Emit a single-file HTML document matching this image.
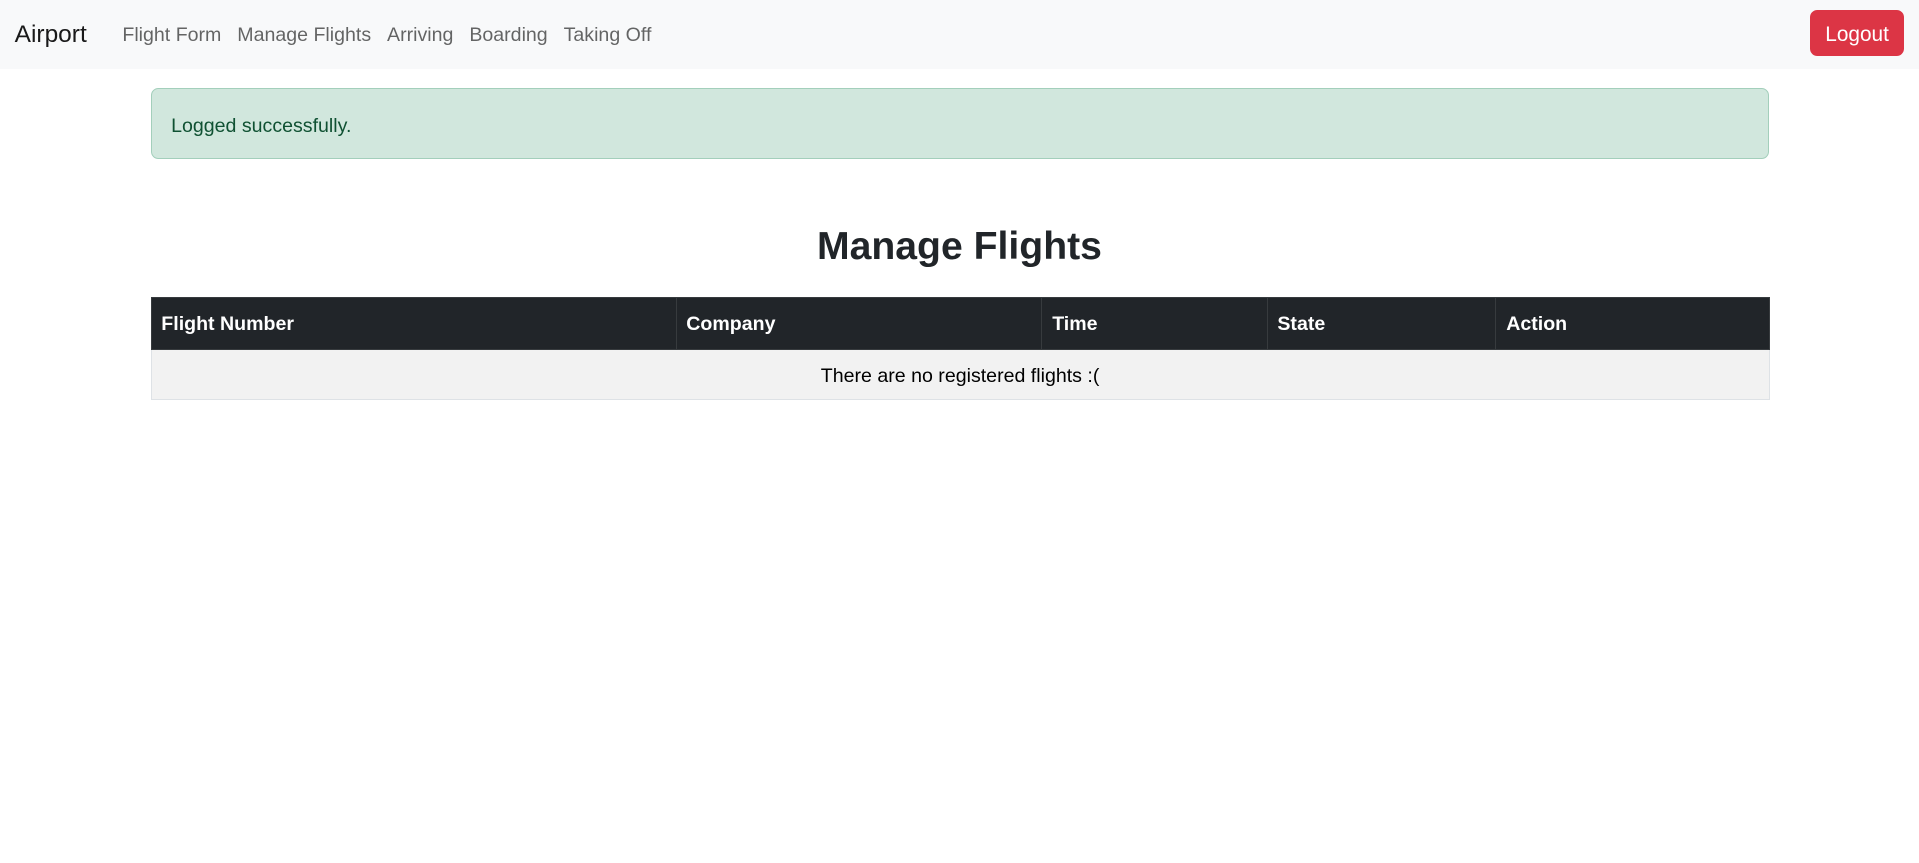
<!DOCTYPE html>
<html><head><meta charset="utf-8"><style>
html,body{margin:0;padding:0;background:#fff;}
#w{zoom:1.2238;width:1568px;height:705px;position:relative;font-family:"Liberation Sans",sans-serif;color:#212529;font-size:16px;}
.nav{position:absolute;left:0;top:0;width:1568px;height:56px;background:#f8f9fa;}
.brand{position:absolute;left:12px;top:17px;font-size:20px;color:rgba(0,0,0,.9);}
.links{position:absolute;left:100px;top:20px;font-size:16px;color:rgba(0,0,0,.6);white-space:nowrap;}
.links span{margin-right:13px;}
.btn{position:absolute;left:1479px;top:8px;width:77px;height:38px;background:#dc3545;border-radius:6px;color:#fff;font-size:17px;line-height:41px;text-align:center;}
.alert{position:absolute;left:123px;top:72px;width:1321px;height:56px;background:#d1e7dd;border:1px solid #a3cfbb;border-radius:6px;color:#0f5132;}
.alert div{position:absolute;left:16px;top:21px;font-size:16px;}
h1{position:absolute;left:0;width:1568px;top:184px;margin:0;text-align:center;font-size:32px;font-weight:bold;color:#212529;}
table{position:absolute;left:123px;top:243px;width:1323px;border-collapse:collapse;font-size:16px;}
th{background:#212529;color:#fff;text-align:left;height:42px;padding:2px 8px 0;border:1px solid #373b3e;box-sizing:border-box;}
td{background:#f2f2f2;text-align:center;height:41px;padding:3px 0 0;border:1px solid #dee2e6;color:#000;box-sizing:border-box;}
</style></head><body><div id="w">
<div class="nav"><div class="brand">Airport</div>
<div class="links"><span>Flight Form</span><span>Manage Flights</span><span>Arriving</span><span>Boarding</span><span>Taking Off</span></div>
<div class="btn">Logout</div></div>
<div class="alert"><div>Logged successfully.</div></div>
<h1>Manage Flights</h1>
<table><tr><th style="width:429px">Flight Number</th><th style="width:299px">Company</th><th style="width:184px">Time</th><th style="width:187px">State</th><th>Action</th></tr>
<tr><td colspan="5">There are no registered flights :(</td></tr></table>
</div></body></html>
